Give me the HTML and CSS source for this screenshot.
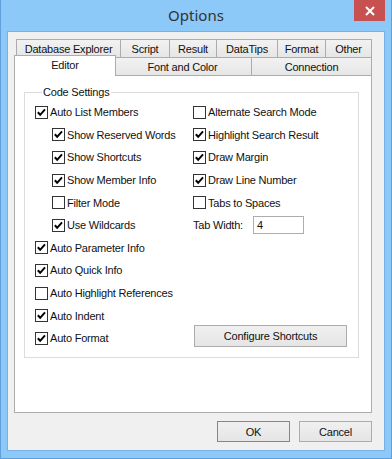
FILE: index.html
```html
<!DOCTYPE html>
<html>
<head>
<meta charset="utf-8">
<link rel="stylesheet" href="styles.css">
</head>
<body>
<div class="window">
  <div class="titlebar">
    <span></span>
    <span class="title">Options</span>
    <div class="close"><svg width="10" height="10" viewBox="0 0 10 10"><path d="M1 1L9 9M9 1L1 9" stroke="#fff" stroke-width="2"/></svg></div>
  </div>
  <div class="client">
    <div class="tabs">
      <div class="tabrow row1">
        <div class="tab w-db">Database Explorer</div>
        <div class="tab w-script">Script</div>
        <div class="tab w-result">Result</div>
        <div class="tab w-datatips">DataTips</div>
        <div class="tab w-format">Format</div>
        <div class="tab w-other">Other</div>
      </div>
      <div class="tabrow row2">
        <div class="tab w-editor selected">Editor</div>
        <div class="tab w-font">Font and Color</div>
        <div class="tab w-conn">Connection</div>
      </div>
    </div>
    <div class="panel">
      <fieldset class="group">
        <legend>Code Settings</legend>
        <div class="cols">
          <div class="col left">
            <div class="row"><span class="cb on"></span>Auto List Members</div>
            <div class="row sub"><span class="cb on"></span>Show Reserved Words</div>
            <div class="row sub"><span class="cb on"></span>Show Shortcuts</div>
            <div class="row sub"><span class="cb on"></span>Show Member Info</div>
            <div class="row sub"><span class="cb"></span>Filter Mode</div>
            <div class="row sub"><span class="cb on"></span>Use Wildcards</div>
            <div class="row"><span class="cb on"></span>Auto Parameter Info</div>
            <div class="row"><span class="cb on"></span>Auto Quick Info</div>
            <div class="row"><span class="cb"></span>Auto Highlight References</div>
            <div class="row"><span class="cb on"></span>Auto Indent</div>
            <div class="row"><span class="cb on"></span>Auto Format</div>
          </div>
          <div class="col right">
            <div class="row"><span class="cb"></span>Alternate Search Mode</div>
            <div class="row"><span class="cb on"></span>Highlight Search Result</div>
            <div class="row"><span class="cb on"></span>Draw Margin</div>
            <div class="row"><span class="cb on"></span>Draw Line Number</div>
            <div class="row"><span class="cb"></span>Tabs to Spaces</div>
            <div class="row tabwidth"><span class="lbl">Tab Width:</span><span class="input">4</span></div>
            <div class="btn configure">Configure Shortcuts</div>
          </div>
        </div>
      </fieldset>
    </div>
    <div class="buttons">
      <div class="btn dialog default">OK</div>
      <div class="btn dialog">Cancel</div>
    </div>
  </div>
</div>
</body>
</html>
```

FILE: styles.css
```css
html, body {
  margin: 0;
  padding: 0;
  background: #8cc8f8;
}
.window {
  width: 392px;
  height: 459px;
  box-sizing: border-box;
  background: #8cc8f8;
  border-left: 1px solid #5f9fdc;
  border-right: 1px solid #5f9fdc;
  border-bottom: 1px solid #5f9fdc;
  padding: 0 6px 7px 6px;
  display: flex;
  flex-direction: column;
  font-family: "Liberation Sans", Arial, sans-serif;
  font-size: 11px;
  letter-spacing: -0.2px;
  color: #111;
}
.titlebar {
  height: 31px;
  display: grid;
  grid-template-columns: 1fr auto 1fr;
  align-items: start;
}
.title {
  font-family: "Noto Sans", "Open Sans", sans-serif;
  font-size: 15px;
  letter-spacing: 0;
  color: #333;
  line-height: 30px;
}
.close {
  justify-self: end;
  width: 31px;
  height: 21px;
  background: #c75050;
  display: flex;
  align-items: center;
  justify-content: center;
}
.close svg { display: block; }
.client {
  height: 420px;
  box-sizing: border-box;
  border: 1px solid #78b0e4;
  background: #f0f0f0;
  padding: 7px 0 0 6px;
  display: flex;
  flex-direction: column;
}
.tabs {
  width: 358px;
  display: flex;
  flex-direction: column;
}
.tabrow {
  display: flex;
  height: 18px;
  padding-left: 2px;
}
.tab {
  box-sizing: border-box;
  border: 1px solid #acacac;
  border-bottom: none;
  margin-right: -1px;
  background: linear-gradient(#f2f2f2, #e6e6e6);
  display: flex;
  align-items: center;
  justify-content: center;
  white-space: nowrap;
  padding-top: 1px;
}
.w-db { width: 105px; }
.w-script { width: 50px; }
.w-result { width: 48px; }
.w-datatips { width: 62px; }
.w-format { width: 49px; }
.w-other { width: 47px; }
.w-editor { width: 98px; }
.w-font { width: 139px; }
.w-conn { width: 121px; }
.tab.selected {
  width: 102px;
  margin-left: -2px;
  margin-right: -3px;
  margin-top: -2px;
  margin-bottom: -1px;
  background: #fff;
  position: relative;
  z-index: 1;
  padding-top: 0;
  padding-bottom: 2px;
}
.panel {
  width: 358px;
  height: 338px;
  box-sizing: border-box;
  border: 1px solid #acacac;
  background: #fff;
  padding: 10px 0 0 9px;
}
.group {
  margin: 0;
  width: 335px;
  height: 272px;
  box-sizing: border-box;
  border: 1px solid #dcdcdc;
  padding: 2px 0 0 10px;
}
.group legend {
  padding: 0 1px;
  margin-left: 7px;
  line-height: 13px;
}
.cols {
  display: flex;
}
.col {
  display: flex;
  flex-direction: column;
}
.col.left { width: 158px; }
.row {
  height: 22.6px;
  display: flex;
  align-items: center;
  white-space: nowrap;
}
.row.sub { padding-left: 17px; }
.cb {
  width: 13px;
  height: 13px;
  box-sizing: border-box;
  border: 1px solid #333;
  background: #fff;
  margin-right: 2px;
  flex: none;
}
.cb.on {
  background: #fff url("data:image/svg+xml;utf8,<svg xmlns='http://www.w3.org/2000/svg' width='11' height='11' viewBox='0 0 11 11'><polyline points='1.8,5.2 4.2,7.8 9,2.4' fill='none' stroke='black' stroke-width='2'/></svg>") no-repeat center;
}
.tabwidth .lbl { width: 60px; }
.input {
  width: 51px;
  height: 18px;
  box-sizing: border-box;
  border: 1px solid #abadb3;
  background: #fff;
  padding-left: 3px;
  display: flex;
  align-items: center;
}
.btn {
  box-sizing: border-box;
  border: 1px solid #acacac;
  background: linear-gradient(#f0f0f0, #e5e5e5);
  display: flex;
  align-items: center;
  justify-content: center;
}
.configure {
  width: 153px;
  height: 22px;
  margin-top: 88px;
  margin-left: 1px;
}
.buttons {
  width: 358px;
  display: flex;
  justify-content: flex-end;
  gap: 9px;
  margin-top: 8px;
}
.dialog {
  width: 73px;
  height: 21px;
}
.dialog.default { border-color: #3399ff; }
```
